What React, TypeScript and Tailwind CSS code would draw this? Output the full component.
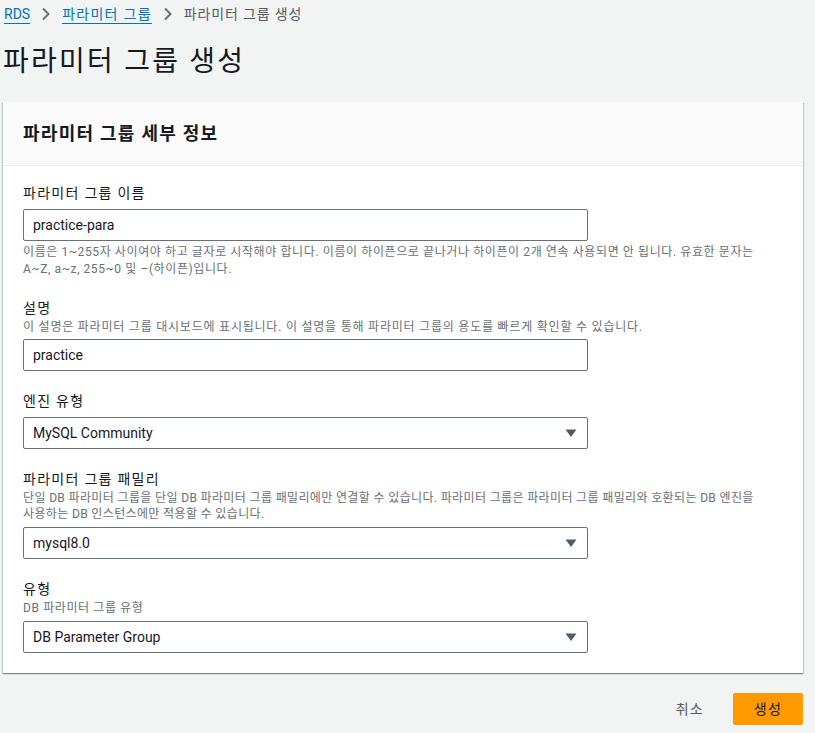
import React from "react";

const font = { fontFamily: 'Roboto, "Noto Sans CJK KR", sans-serif' };

function Caret() {
  return (
    <svg width="12" height="10" viewBox="0 0 12 10" className="shrink-0">
      <path d="M0.5 1.5h11L6 9z" fill="#545b64" />
    </svg>
  );
}

function Chevron() {
  return (
    <svg width="10" height="14" viewBox="0 0 10 14" className="mx-[11px]">
      <path d="M2 1.5l5.5 5.5L2 12.5" stroke="#687078" strokeWidth="2" fill="none" />
    </svg>
  );
}

function TextInput({ value }: { value: string }) {
  return (
    <div className="flex h-[32px] w-[565px] items-center rounded-[2px] border border-[#687078] bg-white px-[9px] text-[14px] tracking-normal text-[#16191f]">
      {value}
    </div>
  );
}

function Select({ value }: { value: string }) {
  return (
    <div className="flex h-[32px] w-[565px] items-center justify-between rounded-[2px] border border-[#687078] bg-white pl-[9px] pr-[10px] text-[14px] tracking-normal text-[#16191f]">
      <span>{value}</span>
      <Caret />
    </div>
  );
}

function Label({ children }: { children: React.ReactNode }) {
  return <div className="text-[14px] leading-[22px] text-[#16191f]">{children}</div>;
}

export default function App() {
  return (
    <div className="min-h-[733px] w-[815px] bg-[#f2f3f3] tracking-[0.08em] text-[#16191f]" style={font}>
      <nav className="flex h-[28px] items-center pl-[4px] text-[14px]">
        <a className="tracking-normal text-[#0073bb] underline underline-offset-[4px]">RDS</a>
        <Chevron />
        <a className="text-[#0073bb] underline underline-offset-[4px]">파라미터 그룹</a>
        <Chevron />
        <span className="tracking-[0.06em] text-[#545b64]">파라미터 그룹 생성</span>
      </nav>
      <h1 className="mt-[14px] pl-[3px] text-[28px] leading-[40px] font-normal tracking-[0.08em]">파라미터 그룹 생성</h1>

      <div className="mx-[3px] mt-[20px] w-[800px] bg-white shadow-[0_1px_1px_0_rgba(0,28,36,0.3),1px_1px_1px_0_rgba(0,28,36,0.15),-1px_1px_1px_0_rgba(0,28,36,0.15)]">
        <div className="flex h-[64px] items-center border-b border-[#eaeded] bg-[#fafafa] px-[20px]">
          <h2 className="text-[18px] font-bold tracking-[0.07em]">파라미터 그룹 세부 정보</h2>
        </div>
        <div className="flex flex-col gap-[19px] px-[20px] pt-[16px] pb-[20px]">
          <div>
            <Label>파라미터 그룹 이름</Label>
            <div className="mt-[5px]">
              <TextInput value="practice-para" />
            </div>
            <div className="mt-[3px] text-[12px] leading-[17px] tracking-[0.05em] whitespace-nowrap text-[#687078]">
              이름은 1~255자 사이여야 하고 글자로 시작해야 합니다. 이름이 하이픈으로 끝나거나 하이픈이 2개 연속 사용되면 안 됩니다. 유효한 문자는
              <br />
              A~Z, a~z, 255~0 및 –(하이픈)입니다.
            </div>
          </div>

          <div>
            <Label>설명</Label>
            <div className="text-[12px] leading-[16px] tracking-[0.065em] whitespace-nowrap text-[#687078]">
              이 설명은 파라미터 그룹 대시보드에 표시됩니다. 이 설명을 통해 파라미터 그룹의 용도를 빠르게 확인할 수 있습니다.
            </div>
            <div className="mt-[4px]">
              <TextInput value="practice" />
            </div>
          </div>

          <div>
            <Label>엔진 유형</Label>
            <div className="mt-[5px]">
              <Select value="MySQL Community" />
            </div>
          </div>

          <div>
            <Label>파라미터 그룹 패밀리</Label>
            <div className="text-[12px] leading-[16px] tracking-[0.03em] whitespace-nowrap text-[#687078]">
              단일 DB 파라미터 그룹을 단일 DB 파라미터 그룹 패밀리에만 연결할 수 있습니다. 파라미터 그룹은 파라미터 그룹 패밀리와 호환되는 DB 엔진을
              <br />
              사용하는 DB 인스턴스에만 적용할 수 있습니다.
            </div>
            <div className="mt-[5px]">
              <Select value="mysql8.0" />
            </div>
          </div>

          <div>
            <Label>유형</Label>
            <div className="text-[12px] leading-[16px] tracking-[0.05em] whitespace-nowrap text-[#687078]">
              DB 파라미터 그룹 유형
            </div>
            <div className="mt-[5px]">
              <Select value="DB Parameter Group" />
            </div>
          </div>
        </div>
      </div>

      <div className="mt-[20px] flex w-[803px] items-center justify-end gap-[29px]">
        <button className="text-[14px] text-[#545b64]">취소</button>
        <button className="h-[32px] w-[70px] rounded-[2px] bg-[#ff9900] text-[14px] text-[#16191f]">생성</button>
      </div>
    </div>
  );
}
